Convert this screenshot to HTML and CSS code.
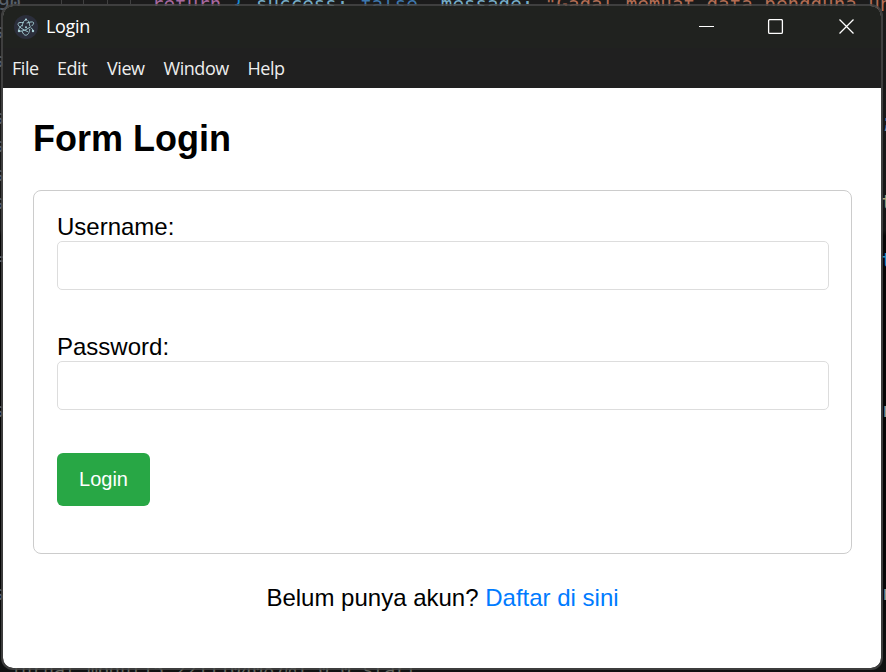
FILE: index.html
```html
<!DOCTYPE html>
<html lang="id">
<head>
<meta charset="utf-8">
<title>Login</title>
<link rel="stylesheet" href="styles.css">
</head>
<body>
<div class="editor" aria-hidden="true">
  <span class="code line-number">90</span>
  <i class="guide g1"></i><i class="guide g2"></i><i class="guide g3"></i><i class="guide g4"></i>
  <div class="code top-line"><span class="keyword">return</span> <span class="brace">{</span> <span class="prop">success:</span> <span class="bool">false</span>, <span class="prop">message:</span> <span class="string">"Gagal memuat data pengguna untuk</span></div>
  <span class="code left l1">s</span><span class="code left l2">s</span><span class="code left l3">s</span><span class="code left l4">s</span><span class="code left l5">s</span><span class="code left l6">s</span><span class="code left l7">=</span><span class="code left l8">s</span><span class="code left l9">s</span>
  <span class="code right r1">;</span><span class="code right r2">t</span><span class="code right r3">t</span><span class="code right r4">r</span><span class="code right r5">r</span>
  <div class="code bottom-line">jurnal_modul15_2211104087@1.0.0 start</div>
</div>
<div class="window">
  <header class="titlebar">
    <svg class="app-icon" width="24" height="24" viewBox="0 0 24 24" fill="none">
      <circle cx="12" cy="12" r="12" fill="#2b2e3b"/>
      <g stroke="#9fc8cf" stroke-width="1" stroke-linecap="round">
        <path d="M9.500 7.700C6.800 7.200 4.600 7.500 4.100 8.500c-.6 1.100.9 3.200 3.700 5.100 1.800 1.300 3.800 2.300 5.700 2.900"/>
        <path d="M7.600 10.500C5.500 12.500 4.300 14.500 4.800 15.500c.6 1.100 3.200.8 6.300-.5 2-.8 3.700-2 5.200-3.200"/>
        <path d="M18 10.700c1.500-1.500 2-2.600 1.500-3.200-.8-1-3.400-.7-6.500.5M16.800 12.500c1.200 1 2 2 2.200 3"/>
        <path d="M8.200 16.500c.8 2.400 2.100 3.700 3.600 3.700 2 0 3.600-2.400 4-6M12.500 4.700C10.400 4.800 8.500 6.800 8.200 11M14 5.700c.9 1 1.500 2.800 1.700 4.800"/>
      </g>
      <g fill="#a9d3da"><circle cx="12" cy="12.200" r="1"/><circle cx="12" cy="4.500" r="1.100"/><circle cx="5" cy="16" r="1.200"/><circle cx="19" cy="16" r="1.200"/></g>
    </svg>
    <span class="title">Login</span>
    <svg class="controls" width="156" height="16" viewBox="0 0 156 16" fill="none" stroke="#fff">
      <path d="M0 7.500h15" stroke-width="1"/>
      <rect x="69.600" y=".6" width="13.800" height="13.800" rx="1.200" stroke-width="1.300"/>
      <path d="M140.500.500l14 14m0-14l-14 14" stroke-width="1.300"/>
    </svg>
  </header>
  <nav class="menu"><span class="file">File</span><span class="edit">Edit</span><span class="view">View</span><span class="win">Window</span><span class="help">Help</span></nav>
  <main class="content">
    <h1>Form Login</h1>
    <form class="card">
      <label for="username">Username:</label>
      <input id="username" type="text">
      <label for="password">Password:</label>
      <input id="password" type="password">
      <button type="button">Login</button>
    </form>
    <p class="register">Belum punya akun? <a href="#">Daftar di sini</a></p>
  </main>
</div>
</body>
</html>
```
FILE: styles.css
```css
* { box-sizing: border-box; }
html, body { height: 100%; }
body {
  margin: 0;
  padding: 4px 3px 2px 1px;
  overflow: hidden;
  background: #121212;
  font-family: "Liberation Sans", Arial, sans-serif;
  color: #000;
}

/* Code editor behind the window */
.editor {
  position: absolute;
  inset: 0;
  overflow: hidden;
  background: linear-gradient(#1b1b1b 0, #151515 230px, #050505 236px, #050505 560px, #101212 100%);
}
.code {
  position: absolute;
  font: 19.200px/24px "DejaVu Sans Mono", monospace;
  white-space: pre;
  color: #999;
}
.line-number { left: -2px; top: -8px; color: #59616b; }
.top-line { left: 152px; top: -7px; }
.keyword { color: #a7689f; }
.brace { color: #1688d5; }
.prop { color: #76adc8; }
.bool { color: #3e78ae; }
.string { color: #b36d53; }
.guide { position: absolute; top: 0; width: 1px; height: 4px; background: #404040; }
.g1 { left: 61px; }
.g2 { left: 83px; }
.g3 { left: 107px; }
.g4 { left: 130px; }
.left { left: -7px; color: #59616b; }
.l1 { top: 20px; }
.l2 { top: 49px; }
.l3 { top: 106px; }
.l4 { top: 134px; }
.l5 { top: 163px; }
.l6 { top: 191px; }
.l7 { top: 247px; }
.l8 { top: 399px; }
.l9 { top: 582px; }
.right { left: 881px; }
.r1 { top: 110px; color: #7895b0; }
.r2 { top: 191px; color: #aaa37b; }
.r3 { top: 249px; color: #238fc0; }
.r4 { top: 399px; }
.r5 { top: 582px; }
.bottom-line { left: 10px; top: 658px; font-size: 18.300px; color: #62665f; }

.window {
  position: relative;
  display: flex;
  flex-direction: column;
  height: 100%;
  border: 2px solid rgba(72, 73, 72, .8);
  border-radius: 12px;
  overflow: hidden;
  background: #fff;
  background-clip: padding-box;
}
.titlebar {
  display: flex;
  align-items: center;
  flex: 0 0 42px;
  padding: 0 26px 0 11px;
  background: #20221f;
  color: #fff;
  font: 18px "Open Sans", sans-serif;
}
.title { margin: -2px 0 0 8px; letter-spacing: -.3px; }
.controls { margin-left: auto; }
.menu {
  display: grid;
  grid-template-columns: 45px 50px 56.500px 84px auto;
  align-items: center;
  flex: 0 0 40px;
  padding-left: 9px;
  background: #202020;
  color: #eee;
  font: 18px "Open Sans", sans-serif;
  letter-spacing: -.45px;
}
.content { padding: 0 29px 0 30px; }
h1 { margin: 30px 0 31px; font-size: 36px; line-height: 41px; }
.card {
  height: 364px;
  padding: 22px 22px 22px 23px;
  border: 1px solid #ccc;
  border-radius: 8px;
}
label { display: block; font-size: 24px; line-height: 28px; }
input {
  display: block;
  width: 100%;
  height: 49px;
  margin: 0 0 43px;
  border: 1px solid #ddd;
  border-radius: 5px;
  background: #fff;
}
button {
  display: block;
  width: 93px;
  height: 53px;
  padding: 0;
  border: 0;
  border-radius: 6px;
  background: #28a745;
  color: #fff;
  font: 20px "Liberation Sans", Arial, sans-serif;
}
.register { margin: 30px 0 0; text-align: center; font-size: 24px; line-height: 28px; }
.register a { color: #007bff; text-decoration: none; }
```
